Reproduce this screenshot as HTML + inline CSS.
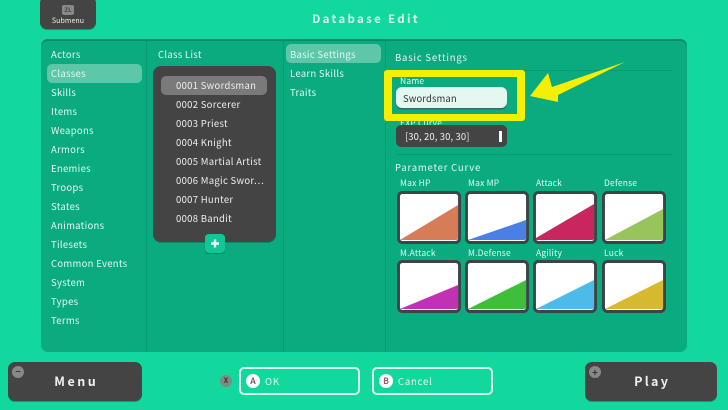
<!DOCTYPE html>
<html><head><meta charset="utf-8">
<style>
html,body{margin:0;padding:0}
body{width:728px;height:410px;overflow:hidden;position:relative;background:#12d89e;font-family:"Noto Sans CJK JP","Liberation Sans",sans-serif;color:#e4f8f1}
.a{position:absolute;white-space:nowrap}
.t{position:absolute;white-space:nowrap;font-size:9.5px;letter-spacing:.3px;line-height:14px;height:14px}
.h{letter-spacing:.8px}
.w{color:#eee}
.d{position:absolute;background:#444;}
.lb{font-size:8.5px;letter-spacing:.2px;line-height:12px;height:12px}
.div{position:absolute;background:#099a73}
.btn{position:absolute;box-sizing:border-box;border:2px solid #dcfaf0;border-radius:5px;height:28px;top:367px}
.c{position:absolute;border-radius:50%;text-align:center}
svg.card{position:absolute;width:65px;height:53px}
</style></head><body>

<div class="d" style="left:40px;top:-4px;width:56px;height:33px;border-radius:7px;box-shadow:0 1px 0 #0a9c74"></div>
<div class="a" style="left:62px;top:5px;width:12px;height:10px;background:#888;border-radius:2px;color:#444;font-size:6px;line-height:10px;text-align:center;font-weight:700">ZL</div>
<div class="a" style="left:40px;top:15px;width:56px;text-align:center;font-size:7px;line-height:12px;color:#eee;letter-spacing:.1px">Submenu</div>
<div class="a" style="left:250px;top:11px;width:230px;text-align:center;font-size:11.5px;font-weight:700;line-height:16px;letter-spacing:2.3px;text-indent:2px;color:#dcf8ef">Database Edit</div>

<div class="a" style="left:41px;top:39px;width:646px;height:313px;border-radius:7px;background:#0bab80;box-shadow:inset 0 2px 0 #078a66"></div>
<div class="div" style="left:146px;top:41px;width:1px;height:311px"></div>
<div class="div" style="left:283px;top:41px;width:1px;height:311px"></div>
<div class="div" style="left:385px;top:41px;width:1px;height:311px"></div>

<div class="a" style="left:47px;top:64px;width:95px;height:19px;border-radius:5px;background:#5cc7a9"></div>
<div class="t" style="left:51px;top:47px">Actors</div>
<div class="t" style="left:51px;top:66px">Classes</div>
<div class="t" style="left:51px;top:85px">Skills</div>
<div class="t" style="left:51px;top:104px">Items</div>
<div class="t" style="left:51px;top:123px">Weapons</div>
<div class="t" style="left:51px;top:142px">Armors</div>
<div class="t" style="left:51px;top:161px">Enemies</div>
<div class="t" style="left:51px;top:180px">Troops</div>
<div class="t" style="left:51px;top:199px">States</div>
<div class="t" style="left:51px;top:218px">Animations</div>
<div class="t" style="left:51px;top:237px">Tilesets</div>
<div class="t" style="left:51px;top:256px">Common Events</div>
<div class="t" style="left:51px;top:275px">System</div>
<div class="t" style="left:51px;top:294px">Types</div>
<div class="t" style="left:51px;top:313px">Terms</div>

<div class="t" style="left:158px;top:47px">Class List</div>
<div class="d" style="left:153px;top:66px;width:123px;height:176px;border-radius:8px;box-shadow:0 1px 0 #088a66"></div>
<div class="a" style="left:161px;top:76px;width:106px;height:19px;border-radius:5px;background:#7a7a7a"></div>
<div class="t w" style="left:176px;top:78px">0001 Swordsman</div>
<div class="t w" style="left:176px;top:97px">0002 Sorcerer</div>
<div class="t w" style="left:176px;top:116px">0003 Priest</div>
<div class="t w" style="left:176px;top:135px">0004 Knight</div>
<div class="t w" style="left:176px;top:154px">0005 Martial Artist</div>
<div class="t w" style="left:176px;top:173px">0006 Magic Swor⋯</div>
<div class="t w" style="left:176px;top:192px">0007 Hunter</div>
<div class="t w" style="left:176px;top:211px">0008 Bandit</div>
<div class="a" style="left:205px;top:234px;width:20px;height:19px;border-radius:4px;background:#12c795;box-shadow:0 1px 0 #077a5c"></div>
<svg class="a" style="left:205px;top:234px" width="20" height="19"><path d="M10 5.5v8M6 9.5h8" stroke="#eafbf5" stroke-width="2.4" fill="none"/></svg>

<div class="a" style="left:286px;top:44px;width:95px;height:19px;border-radius:5px;background:#5cc7a9"></div>
<div class="t" style="left:290px;top:47px">Basic Settings</div>
<div class="t" style="left:290px;top:66px">Learn Skills</div>
<div class="t" style="left:290px;top:85px">Traits</div>

<div class="t h" style="left:395px;top:50px">Basic Settings</div>
<div class="div" style="left:395px;top:70px;width:277px;height:1px"></div>
<div class="t lb" style="left:400px;top:117px">EXP Curve</div>
<div class="d" style="left:396px;top:125px;width:111px;height:22px;border-radius:5px"></div>
<div class="t w" style="left:405px;top:129px;letter-spacing:.1px">[30, 20, 30, 30]</div>
<div class="a" style="left:499px;top:131px;width:3px;height:11px;background:#fff"></div>

<div class="a" style="left:384px;top:70px;width:141px;height:51px;box-sizing:border-box;border:solid #f4f000;border-width:7px 8px;border-radius:3px;"></div>
<div class="t lb" style="left:400px;top:75px">Name</div>
<div class="a" style="left:396px;top:87px;width:111px;height:21px;border-radius:6px;background:#e4f8f2;box-shadow:0 1.5px 0 #3a6a5c"></div>
<div class="t" style="left:403px;top:91px;color:#333;letter-spacing:.1px">Swordsman</div>
<svg class="a" style="left:525px;top:55px" width="105" height="50"><path d="M5 41 23 18 27 32 100 7 33 40 33 47Z" fill="#f4f000"/></svg>

<div class="div" style="left:395px;top:154px;width:277px;height:1px"></div>
<div class="t h" style="left:395px;top:160px">Parameter Curve</div>

<div class="t lb" style="left:400px;top:177px">Max HP</div>
<div class="t lb" style="left:468px;top:177px">Max MP</div>
<div class="t lb" style="left:536px;top:177px">Attack</div>
<div class="t lb" style="left:604px;top:177px">Defense</div>
<div class="t lb" style="left:400px;top:247px">M.Attack</div>
<div class="t lb" style="left:468px;top:247px">M.Defense</div>
<div class="t lb" style="left:536px;top:247px">Agility</div>
<div class="t lb" style="left:604px;top:247px">Luck</div>

<svg class="card" style="left:397px;top:191px" viewBox="0 0 66 53" preserveAspectRatio="none"><rect x="1.5" y="1.5" width="62" height="50" rx="4" fill="#fff" stroke="#3c4446" stroke-width="3"/><path d="M3 49 62 14V47a2 2 0 0 1-2 2Z" fill="#d67d58"/></svg>
<svg class="card" style="left:465px;top:191px" viewBox="0 0 66 53" preserveAspectRatio="none"><rect x="1.5" y="1.5" width="62" height="50" rx="4" fill="#fff" stroke="#3c4446" stroke-width="3"/><path d="M3 49 62 29V47a2 2 0 0 1-2 2Z" fill="#4a7fe6"/></svg>
<svg class="card" style="left:533px;top:191px" viewBox="0 0 66 53" preserveAspectRatio="none"><rect x="1.5" y="1.5" width="62" height="50" rx="4" fill="#fff" stroke="#3c4446" stroke-width="3"/><path d="M3 47 62 13V47a2 2 0 0 1-2 2H3Z" fill="#c8265e"/></svg>
<svg class="card" style="left:602px;top:191px" viewBox="0 0 66 53" preserveAspectRatio="none"><rect x="1.5" y="1.5" width="62" height="50" rx="4" fill="#fff" stroke="#3c4446" stroke-width="3"/><path d="M3 49 62 18V47a2 2 0 0 1-2 2Z" fill="#98c45e"/></svg>
<svg class="card" style="left:397px;top:260px" viewBox="0 0 66 53" preserveAspectRatio="none"><rect x="1.5" y="1.5" width="62" height="50" rx="4" fill="#fff" stroke="#3c4446" stroke-width="3"/><path d="M3 49 62 25V47a2 2 0 0 1-2 2Z" fill="#c231b4"/></svg>
<svg class="card" style="left:465px;top:260px" viewBox="0 0 66 53" preserveAspectRatio="none"><rect x="1.5" y="1.5" width="62" height="50" rx="4" fill="#fff" stroke="#3c4446" stroke-width="3"/><path d="M3 49 62 20V47a2 2 0 0 1-2 2Z" fill="#3fbe3c"/></svg>
<svg class="card" style="left:533px;top:260px" viewBox="0 0 66 53" preserveAspectRatio="none"><rect x="1.5" y="1.5" width="62" height="50" rx="4" fill="#fff" stroke="#3c4446" stroke-width="3"/><path d="M3 49 62 20V47a2 2 0 0 1-2 2Z" fill="#4cbbe8"/></svg>
<svg class="card" style="left:602px;top:260px" viewBox="0 0 66 53" preserveAspectRatio="none"><rect x="1.5" y="1.5" width="62" height="50" rx="4" fill="#fff" stroke="#3c4446" stroke-width="3"/><path d="M3 49 62 20V47a2 2 0 0 1-2 2Z" fill="#d6b92e"/></svg>

<div class="d" style="left:8px;top:362px;width:134px;height:39px;border-radius:7px;box-shadow:0 1px 0 #0a9c74"></div>
<div class="c" style="left:12px;top:366px;width:12px;height:12px;background:#888;color:#333;font-size:9px;line-height:11px;font-weight:700">−</div>
<div class="a" style="left:8px;top:372px;width:134px;text-align:center;font-size:12.5px;font-weight:700;line-height:18px;letter-spacing:2.5px;text-indent:2.5px;color:#f0f0f0">Menu</div>

<div class="d" style="left:585px;top:362px;width:132px;height:39px;border-radius:7px;box-shadow:0 1px 0 #0a9c74"></div>
<div class="c" style="left:589px;top:366px;width:12px;height:12px;background:#888;color:#333;font-size:10px;line-height:11px;font-weight:700">+</div>
<div class="a" style="left:585px;top:372px;width:132px;text-align:center;font-size:12.5px;font-weight:700;line-height:18px;letter-spacing:2.3px;text-indent:2.3px;color:#f0f0f0">Play</div>

<div class="c" style="left:220px;top:375px;width:12px;height:12px;background:#7e8a86;color:#333;font-size:7px;line-height:12px;font-weight:700">X</div>

<div class="btn" style="left:239px;width:121px"></div>
<div class="c" style="left:246px;top:374px;width:14px;height:14px;background:#fff;color:#7a5a6a;font-size:8.5px;line-height:14px;font-weight:700">A</div>
<div class="t" style="left:265px;top:374px;letter-spacing:.8px">OK</div>

<div class="btn" style="left:372px;width:121px"></div>
<div class="c" style="left:379px;top:374px;width:14px;height:14px;background:#fff;color:#a05a5a;font-size:8.5px;line-height:14px;font-weight:700">B</div>
<div class="t" style="left:398px;top:374px;letter-spacing:.8px">Cancel</div>

</body></html>
